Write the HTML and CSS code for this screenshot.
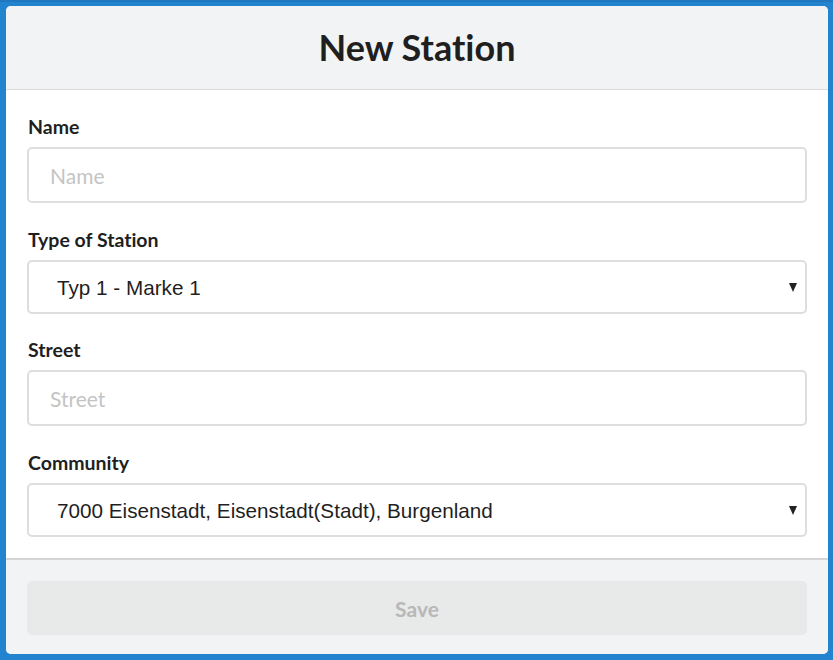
FILE: index.html
```html
<!DOCTYPE html>
<html>
<head>
<meta charset="utf-8">
<link rel="stylesheet" href="styles.css">
</head>
<body>
<div class="frame">
  <div class="card">
    <div class="card-header">
      <h1 class="title">New Station</h1>
    </div>
    <form class="card-body">
      <div class="group group-input">
        <label class="label">Name</label>
        <input class="input" type="text" placeholder="Name">
      </div>
      <div class="group group-select">
        <label class="label">Type of Station</label>
        <div class="select-wrap">
          <select class="select"><option>Typ 1 - Marke 1</option></select>
          <span class="arrow"></span>
        </div>
      </div>
      <div class="group group-input">
        <label class="label">Street</label>
        <input class="input" type="text" placeholder="Street">
      </div>
      <div class="group group-select group-last">
        <label class="label">Community</label>
        <div class="select-wrap">
          <select class="select"><option>7000 Eisenstadt, Eisenstadt(Stadt), Burgenland</option></select>
          <span class="arrow"></span>
        </div>
      </div>
    </form>
    <div class="card-footer">
      <button class="save" type="button" disabled>Save</button>
    </div>
  </div>
</div>
</body>
</html>
```
FILE: styles.css
```css
html, body {
  margin: 0;
  padding: 0;
  height: 100%;
}
body {
  background: #2283cf;
  font-family: Lato, "Open Sans", sans-serif;
}
.frame {
  box-sizing: border-box;
  height: 660px;
  padding: 4px 5px 6px 6px;
  border-top: 2px solid #1f77c0;
}
.card {
  background: #ffffff;
  border-radius: 5px;
  overflow: hidden;
  height: 648px;
  display: flex;
  flex-direction: column;
}
.card-header {
  flex-shrink: 0;
  background: #f2f3f5;
  border-bottom: 1px solid #dadbdc;
  height: 83px;
  display: flex;
  align-items: center;
  justify-content: center;
}
.title {
  margin: 0;
  font-size: 36px;
  font-weight: 700;
  color: #1f1f1f;
  line-height: 1;
  padding-bottom: 2px;
  font-variant-ligatures: none;
}
.card-body {
  flex: 1;
  min-height: 0;
  padding: 26px 21px 0 21px;
  display: flex;
  flex-direction: column;
}
.group {
  display: flex;
  flex-direction: column;
  gap: 9px;
}
.group-input {
  margin-bottom: 26px;
}
.group-select {
  margin-bottom: 25px;
}
.group-last {
  margin-bottom: 0;
}
.label {
  font-size: 19.5px;
  font-weight: 700;
  color: #1f1f1f;
  line-height: 22px;
  padding-left: 1px;
  font-variant-ligatures: none;
}
.input {
  box-sizing: border-box;
  height: 56px;
  width: 100%;
  border: 2px solid #dedede;
  border-radius: 5px;
  padding: 0 21px;
  font-family: Lato, sans-serif;
  font-size: 21px;
  color: #222;
  outline: none;
  background: #fff;
}
.input::placeholder {
  color: #c4c4c4;
}
.select-wrap {
  position: relative;
}
.select {
  box-sizing: border-box;
  -webkit-appearance: none;
  appearance: none;
  width: 100%;
  height: 54px;
  border: 2px solid #dedede;
  border-radius: 5px;
  padding: 0 28px;
  font-family: "Liberation Sans", Arial, sans-serif;
  font-size: 20.7px;
  color: #1f1f1f;
  background: #fff;
  outline: none;
}
.arrow {
  position: absolute;
  right: 10px;
  top: 50%;
  margin-top: -4px;
  width: 0;
  height: 0;
  border-left: 4.5px solid transparent;
  border-right: 4.5px solid transparent;
  border-top: 9px solid #222;
}
.card-footer {
  flex-shrink: 0;
  background: #f2f3f5;
  border-top: 2px solid #d4d5d7;
  height: 96px;
  box-sizing: border-box;
  padding: 21px 21px 0 21px;
}
.save {
  width: 100%;
  height: 54px;
  border: none;
  border-radius: 5px;
  background: #e8e9e9;
  color: #b8b8b8;
  font-family: Lato, sans-serif;
  font-size: 21px;
  font-weight: 700;
}
```
